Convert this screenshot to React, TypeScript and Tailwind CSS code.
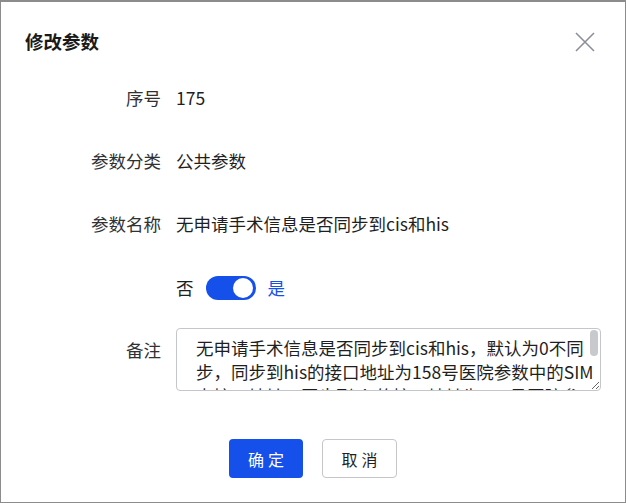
const font = { fontFamily: '"Noto Sans CJK SC", "Noto Sans", sans-serif' };

const remark =
  '无申请手术信息是否同步到cis和his，默认为0不同步，同步到his的接口地址为158号医院参数中的SIM卡接口地址，同步到cis的接口地址为157号医院参数中的地址';

function Row({ label, children }: { label: string; children: React.ReactNode }) {
  return (
    <div className="flex items-center h-[24px]">
      <div className="w-[160px] shrink-0 text-right text-[#303133]">{label}</div>
      <div className="pl-[15px] text-[#1f1f1f]">{children}</div>
    </div>
  );
}

export default function App() {
  return (
    <div
      className="w-[626px] h-[503px] bg-white border-t-2 border-x border-b border-[#8c8c8c] flex flex-col text-[17.5px] leading-[24px]"
      style={font}
    >
      {/* Header */}
      <div className="flex items-center justify-between pl-[24px] pr-[30px] pt-[27px]">
        <h2 className="text-[18.5px] font-bold text-[#1a1a1a] leading-[24px]">修改参数</h2>
        <svg width="20" height="20" viewBox="0 0 20 20" className="mt-[2px]">
          <path d="M1 1L19 19M19 1L1 19" stroke="#8a8f99" strokeWidth="1.6" fill="none" />
        </svg>
      </div>

      {/* Form */}
      <div className="flex flex-col mt-[33px]">
        <Row label="序号">175</Row>
        <div className="h-[39px]" />
        <Row label="参数分类">公共参数</Row>
        <div className="h-[39px]" />
        <Row label="参数名称">无申请手术信息是否同步到cis和his</Row>
        <div className="h-[40px]" />
        <div className="flex items-center h-[24px] pl-[175px]">
          <span className="text-[#1f1f1f]">否</span>
          <div className="ml-[12px] w-[50px] h-[24px] rounded-full bg-[#1550eb] flex items-center justify-end pr-[3px]">
            <div className="w-[20px] h-[20px] rounded-full bg-white" />
          </div>
          <span className="ml-[12px] text-[#1550eb]">是</span>
        </div>
        <div className="h-[28px]" />
        <div className="flex">
          <div className="w-[160px] shrink-0 text-right text-[#303133] pt-[10px]">备注</div>
          <div className="pl-[15px]">
            <div className="relative">
              <textarea
                readOnly
                value={remark}
                className="block w-[425px] h-[63px] resize-y rounded-[4px] border border-[#c4c6cc] pl-[19px] pr-[4px] pt-[7px] text-[17.5px] leading-[24px] text-[#1f1f1f] overflow-hidden outline-none"
                style={font}
              />
              <div className="absolute right-[3px] top-[2px] w-[8px] h-[26px] rounded-full bg-[#c8c9cc]" />
            </div>
          </div>
        </div>
      </div>

      {/* Footer */}
      <div className="flex justify-center gap-[19px] mt-[48px]">
        <button className="w-[74px] h-[39px] rounded-[4px] bg-[#1550eb] text-white text-[16px] tracking-[4px] pl-[4px]">
          确定
        </button>
        <button className="w-[75px] h-[39px] rounded-[4px] border border-[#c4c6cc] bg-white text-[#1f1f1f] text-[16px] tracking-[4px] pl-[4px]">
          取消
        </button>
      </div>
    </div>
  );
}
